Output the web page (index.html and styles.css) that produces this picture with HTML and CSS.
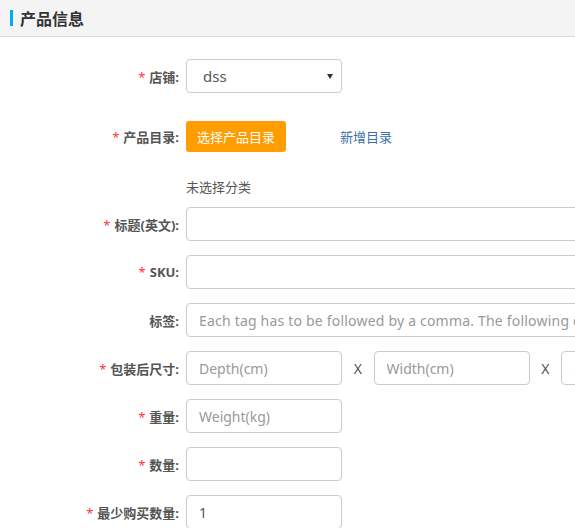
FILE: index.html
```html
<!DOCTYPE html>
<html lang="zh-CN">
<head>
	<meta charset="UTF-8">
	<title>产品信息</title>
	<link rel="stylesheet" href="styles.css">
</head>
<body>
	<div class="panel-title">
		<span class="bar"></span>
		<h3>产品信息</h3>
	</div>
	<form class="form">
		<div class="row row-store">
			<label class="label"><i>*</i>店铺:</label>
			<div class="select-wrap">
				<select class="control small">
					<option>dss</option>
				</select>
			</div>
		</div>
		<div class="row row-catalog">
			<label class="label"><i>*</i>产品目录:</label>
			<button type="button" class="btn-orange">选择产品目录</button>
			<a class="link" href="#">新增目录</a>
		</div>
		<div class="row row-hint">
			<span class="hint">未选择分类</span>
		</div>
		<div class="row">
			<label class="label"><i>*</i>标题(英文):</label>
			<input class="control wide" type="text">
		</div>
		<div class="row">
			<label class="label"><i>*</i>SKU:</label>
			<input class="control wide" type="text">
		</div>
		<div class="row">
			<label class="label">标签:</label>
			<input class="control wide tags" type="text" placeholder="Each tag has to be followed by a comma. The following characters are not allowed">
		</div>
		<div class="row">
			<label class="label"><i>*</i>包装后尺寸:</label>
			<input class="control small" type="text" placeholder="Depth(cm)">
			<span class="times">X</span>
			<input class="control small" type="text" placeholder="Width(cm)">
			<span class="times">X</span>
			<input class="control small" type="text" placeholder="Height(cm)">
		</div>
		<div class="row">
			<label class="label"><i>*</i>重量:</label>
			<input class="control small" type="text" placeholder="Weight(kg)">
		</div>
		<div class="row">
			<label class="label"><i>*</i>数量:</label>
			<input class="control small" type="text">
		</div>
		<div class="row">
			<label class="label"><i>*</i>最少购买数量:</label>
			<input class="control small" type="text" value="1">
		</div>
	</form>
</body>
</html>
```

FILE: styles.css
```css
html,
body {
	margin: 0;
	padding: 0;
	background: #fff;
	overflow: hidden;
}
body {
	font-family: "Noto Sans", "Noto Sans CJK SC", sans-serif;
	font-size: 13px;
	color: #555;
}
.panel-title {
	display: flex;
	align-items: center;
	height: 36px;
	padding-left: 10px;
	background: #f4f4f4;
	border-bottom: 1px solid #dcdcdc;
}
.panel-title .bar {
	width: 3px;
	height: 16px;
	background: #00aeef;
	margin-right: 7px;
}
.panel-title h3 {
	margin: 0;
	font-size: 16px;
	font-weight: bold;
	color: #333;
}
.form {
	margin: 0;
	padding-top: 22px;
	overflow: hidden;
}
.row {
	display: flex;
	align-items: center;
	height: 34px;
	margin-bottom: 14px;
	padding-left: 186px;
	position: relative;
}
.row-store {
	margin-bottom: 26px;
}
.row-catalog {
	margin-bottom: 24px;
}
.row-hint {
	height: 20px;
	margin-bottom: 10px;
}
.label {
	position: absolute;
	right: calc(100% - 179px);
	font-weight: bold;
	color: #555;
	white-space: nowrap;
}
.label i {
	font-style: normal;
	font-weight: normal;
	color: #f33;
	margin-right: 4px;
}
.control {
	flex-shrink: 0;
	box-sizing: border-box;
	height: 34px;
	border: 1px solid #ccc;
	border-radius: 4px;
	padding: 0 12px;
	font-family: inherit;
	font-size: 14px;
	color: #555;
	background: #fff;
	outline: none;
}
.control::placeholder {
	color: #999;
}
.tags {
	letter-spacing: 0.2px;
}
.small {
	width: 156px;
}
.wide {
	width: 560px;
}
.select-wrap {
	position: relative;
}
.select-wrap select {
	appearance: none;
	-webkit-appearance: none;
	padding-left: 16px;
	font-size: 15px;
}
.select-wrap::after {
	content: "";
	position: absolute;
	right: 9px;
	top: 15px;
	border-left: 3px solid transparent;
	border-right: 3px solid transparent;
	border-top: 5px solid #333;
}
.btn-orange {
	height: 31px;
	width: 100px;
	padding: 0;
	border: 0;
	border-radius: 3px;
	background: #ff9c00;
	color: #fff;
	font-family: inherit;
	font-size: 13px;
}
.link {
	margin-left: 54px;
	color: #3a6fa8;
	text-decoration: none;
}
.hint {
	color: #555;
	margin-top: -2px;
}
.times {
	flex-shrink: 0;
	width: 31.5px;
	text-align: center;
	font-size: 14px;
	color: #555;
}
```
